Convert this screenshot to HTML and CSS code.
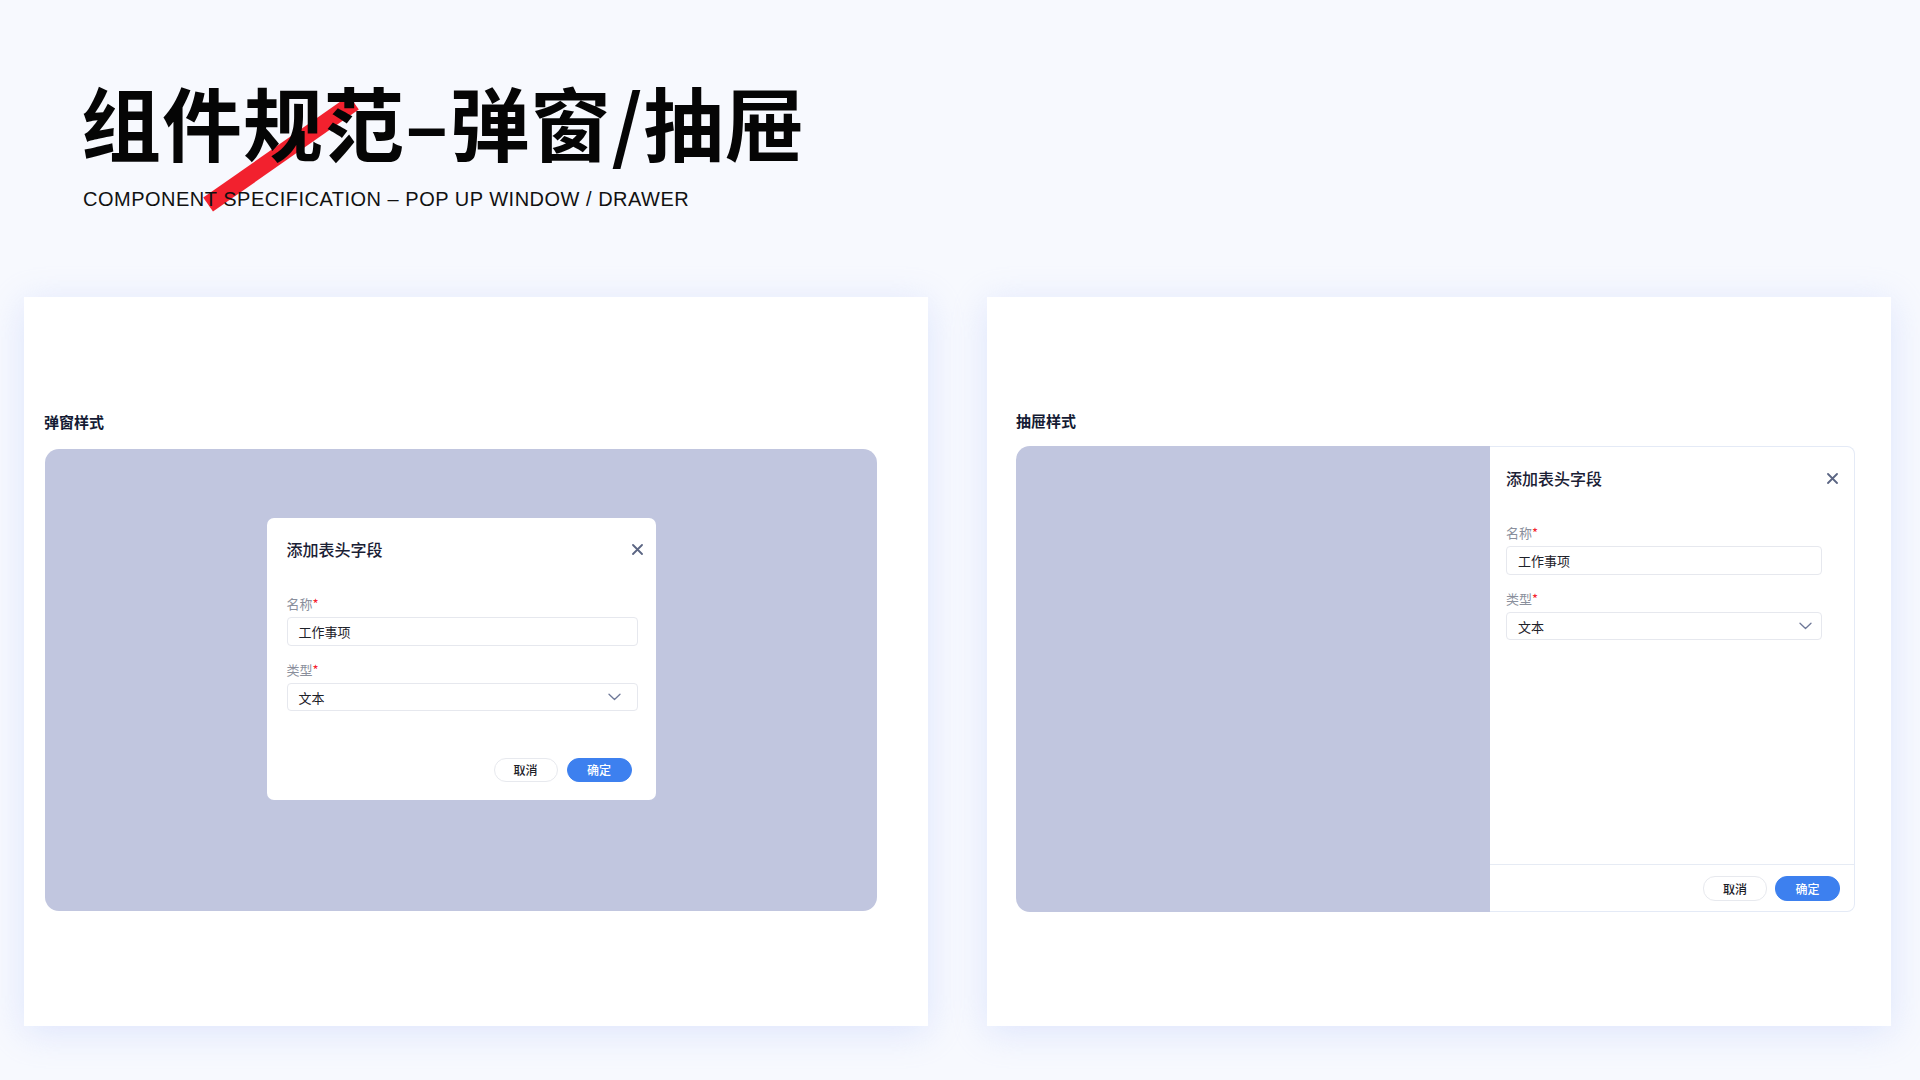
FILE: index.html
```html
<!DOCTYPE html>
<html lang="zh-CN">
<head>
<meta charset="utf-8">
<title>组件规范-弹窗/抽屉</title>
<link rel="stylesheet" href="styles.css">
</head>
<body>
<div class="page">
  <header class="header">
    <div class="stripe"></div>
    <h1 class="title">组件规范–弹窗/抽屉</h1>
    <p class="subtitle">COMPONENT SPECIFICATION – POP UP WINDOW / DRAWER</p>
  </header>

  <main class="cards">
    <section class="card card-modal">
      <h2 class="card-label">弹窗样式</h2>
      <div class="stage">
        <div class="modal">
          <div class="modal-head">
            <span class="panel-title">添加表头字段</span>
            <svg class="close" width="11" height="11" viewBox="0 0 11 11"><path d="M1 1L10 10M10 1L1 10" stroke="#5b6583" stroke-width="1.8" stroke-linecap="round"/></svg>
          </div>
          <div class="field">
            <div class="field-label">名称<span class="req">*</span></div>
            <div class="input">工作事项</div>
          </div>
          <div class="field">
            <div class="field-label">类型<span class="req">*</span></div>
            <div class="input select select-modal">文本
              <svg width="13" height="8" viewBox="0 0 13 8"><path d="M1 1.2L6.5 6.5L12 1.2" fill="none" stroke="#6e7898" stroke-width="1.3" stroke-linecap="round" stroke-linejoin="round"/></svg>
            </div>
          </div>
          <div class="modal-foot">
            <button class="btn btn-ghost">取消</button>
            <button class="btn btn-primary">确定</button>
          </div>
        </div>
      </div>
    </section>

    <section class="card card-drawer">
      <h2 class="card-label">抽屉样式</h2>
      <div class="drawer-demo">
        <div class="mask"></div>
        <div class="drawer">
          <div class="drawer-body">
            <div class="drawer-head">
              <span class="panel-title">添加表头字段</span>
              <svg class="close" width="11" height="11" viewBox="0 0 11 11"><path d="M1 1L10 10M10 1L1 10" stroke="#5b6583" stroke-width="1.8" stroke-linecap="round"/></svg>
            </div>
            <div class="field">
              <div class="field-label">名称<span class="req">*</span></div>
              <div class="input">工作事项</div>
            </div>
            <div class="field">
              <div class="field-label">类型<span class="req">*</span></div>
              <div class="input select select-drawer">文本
                <svg width="13" height="8" viewBox="0 0 13 8"><path d="M1 1.2L6.5 6.5L12 1.2" fill="none" stroke="#6e7898" stroke-width="1.3" stroke-linecap="round" stroke-linejoin="round"/></svg>
              </div>
            </div>
          </div>
          <div class="drawer-foot">
            <button class="btn btn-ghost">取消</button>
            <button class="btn btn-primary">确定</button>
          </div>
        </div>
      </div>
    </section>
  </main>
</div>
</body>
</html>
```

FILE: styles.css
```css
* { box-sizing: border-box; }

html, body {
  margin: 0;
  padding: 0;
  background: #f7f9fe;
}

body {
  width: 1920px;
  height: 1080px;
  overflow: hidden;
  font-family: "Noto Sans CJK SC", "Noto Sans", sans-serif;
  color: #1d2129;
}

.page {
  display: flex;
  flex-direction: column;
  height: 1080px;
}

/* ---------- header ---------- */
.header {
  position: relative;
  height: 297px;
  padding: 75px 0 0 81px;
}

.stripe {
  position: absolute;
  left: 192px;
  top: 145px;
  width: 178px;
  height: 17px;
  background: #f2212e;
  transform: rotate(-35deg);
  z-index: 0;
}

.title {
  position: relative;
  z-index: 1;
  margin: 0;
  font-family: "Noto Sans CJK SC", sans-serif;
  font-weight: 700;
  font-size: 80px;
  line-height: 90px;
  color: #050505;
  letter-spacing: 1px;
}

.subtitle {
  position: relative;
  z-index: 1;
  margin: 24px 0 0 2px;
  font-family: "Liberation Sans", Arial, sans-serif;
  font-size: 20px;
  line-height: 20px;
  color: #111;
  letter-spacing: 0.5px;
}

/* ---------- cards ---------- */
.cards {
  display: flex;
  gap: 59px;
  padding-left: 24px;
}

.card {
  width: 904px;
  height: 729px;
  background: #fff;
  box-shadow: 0 6px 34px rgba(190, 205, 250, 0.45);
  display: flex;
  flex-direction: column;
}

.card-label {
  margin: 0;
  font-size: 15px;
  line-height: 20px;
  font-weight: 700;
  color: #141b34;
}

.card-modal {
  padding: 115px 51px 0 21px;
}
.card-modal .card-label {
  margin: 0 0 17px -1px;
}

.card-drawer {
  padding: 114px 36px 0 29px;
}
.card-drawer .card-label {
  margin: 0 0 15px 0;
}

/* ---------- modal demo ---------- */
.stage {
  height: 462px;
  background: #c1c6df;
  border-radius: 14px;
  display: flex;
  justify-content: center;
  align-items: flex-start;
  padding-top: 69px;
}

.modal {
  width: 389px;
  height: 282px;
  background: #fff;
  border-radius: 7px;
  padding: 20px 18px 0 20px;
  display: flex;
  flex-direction: column;
}

.modal-head,
.drawer-head {
  display: flex;
  justify-content: space-between;
  align-items: center;
  height: 22px;
  margin-bottom: 35px;
}

.modal-head { margin-right: -5px; }
.drawer-head { margin-right: -16px; }

.panel-title {
  font-size: 16px;
  line-height: 22px;
  font-weight: 500;
  color: #1a2034;
}

.close { display: block; }

.field + .field { margin-top: 15px; }

.field-label {
  font-size: 13px;
  line-height: 18px;
  color: #8a8f9c;
  margin-bottom: 4px;
}

.req { color: #f5222d; }

.input {
  height: 29px;
  border: 1px solid #e6e8ee;
  border-radius: 4px;
  padding: 0 11px;
  font-size: 13px;
  line-height: 27px;
  color: #1d2129;
  display: flex;
  align-items: center;
  justify-content: space-between;
}

.select { height: 28px; }
.select-modal { padding-right: 16px; }
.select-drawer { padding-right: 9px; }

.modal-foot {
  margin-top: auto;
  margin-bottom: 18px;
  margin-right: 6px;
  display: flex;
  justify-content: flex-end;
  gap: 9px;
}

.btn {
  width: 64px;
  height: 24px;
  border-radius: 12px;
  font-family: "Noto Sans CJK SC", sans-serif;
  font-size: 12px;
  font-weight: 500;
  line-height: 22px;
  padding: 0;
  border: 1px solid transparent;
}

.btn-ghost {
  background: #fff;
  border-color: #e7e9ee;
  color: #1d2129;
}

.btn-primary {
  width: 65px;
  background: #3d80ef;
  border-color: #3d80ef;
  color: #fff;
}

/* ---------- drawer demo ---------- */
.drawer-demo {
  height: 466px;
  display: flex;
}

.mask {
  flex: 1;
  background: #c1c6df;
  border-radius: 14px 0 0 14px;
}

.drawer {
  width: 365px;
  background: #fff;
  border: 1px solid #e4eaf6;
  border-left: none;
  border-radius: 0 8px 8px 0;
  display: flex;
  flex-direction: column;
}

.drawer-body {
  flex: 1;
  padding: 20px 32px 0 16px;
}

.drawer-foot {
  height: 47px;
  border-top: 1px solid #e6ebf4;
  display: flex;
  justify-content: flex-end;
  align-items: center;
  gap: 8px;
  padding: 1px 14px 0 0;
}

.drawer-foot .btn { height: 25px; line-height: 23px; }
```
